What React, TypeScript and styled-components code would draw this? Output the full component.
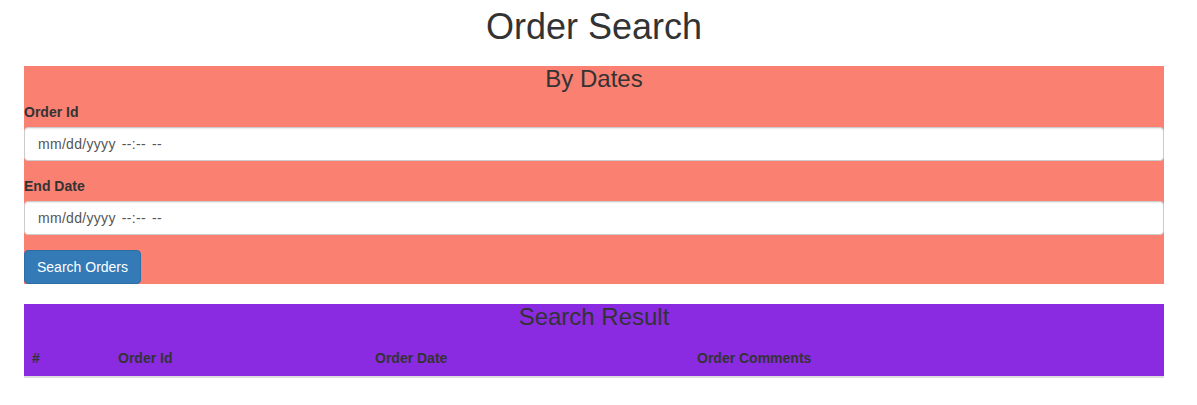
import React from "react";
import styled, { createGlobalStyle } from "styled-components";

const Global = createGlobalStyle`
  html, body { margin: 0; padding: 0; background: #fff; }
  body {
    font-family: "Liberation Sans", Arial, Helvetica, sans-serif;
    font-size: 14px;
    line-height: 1.42857143;
    color: #333;
  }
  * { box-sizing: border-box; }
`;

const Container = styled.div`
  width: 1140px;
  margin: 0 0 0 24px;
`;

const Title = styled.h1`
  margin: 7px 0 19px;
  font-size: 36px;
  font-weight: 500;
  line-height: 1.1;
  text-align: center;
  color: #333;
`;

const Panel = styled.section<{ $bg: string }>`
  background: ${(p) => p.$bg};
  margin-bottom: 20px;
`;

const PanelTitle = styled.h3`
  margin: 0 0 10px;
  font-size: 24px;
  font-weight: 500;
  line-height: 1.1;
  text-align: center;
  color: #333;
`;

const FormGroup = styled.div`
  margin-bottom: 15px;
`;

const Label = styled.label`
  display: inline-block;
  margin-bottom: 5px;
  font-weight: 700;
  color: #333;
`;

const Input = styled.input`
  display: block;
  width: 100%;
  height: 34px;
  padding: 6px 12px 6px 13px;
  font-family: "Liberation Sans", Arial, sans-serif;
  font-size: 14px;
  line-height: 1.42857143;
  letter-spacing: 0.3px;
  word-spacing: 2px;
  color: #555;
  background: #fff;
  border: 1px solid #ccc;
  border-radius: 4px;
  box-shadow: inset 0 1px 1px rgba(0, 0, 0, 0.075);
  outline: none;
  &::placeholder {
    color: #555;
    opacity: 1;
    letter-spacing: 0.3px;
    word-spacing: 2px;
  }
`;

const Button = styled.button`
  display: inline-block;
  height: 34px;
  padding: 6px 12px;
  font-family: "Liberation Sans", Arial, sans-serif;
  font-size: 14px;
  line-height: 1.42857143;
  color: #fff;
  background: #337ab7;
  border: 1px solid #2e6da4;
  border-radius: 4px;
  vertical-align: top;
`;

const Table = styled.table`
  width: 100%;
  border-collapse: collapse;
  border-spacing: 0;
`;

const Th = styled.th<{ $w: number }>`
  width: ${(p) => p.$w}px;
  padding: 8px;
  text-align: left;
  font-weight: 700;
  line-height: 1.42857143;
  color: #333;
  border-bottom: 2px solid #ddd;
`;

export default function App() {
  return (
    <>
      <Global />
      <Container>
        <Title>Order Search</Title>
        <Panel $bg="#fa8072">
          <PanelTitle>By Dates</PanelTitle>
          <FormGroup>
            <Label htmlFor="start">Order Id</Label>
            <Input id="start" type="text" placeholder="mm/dd/yyyy --:-- --" />
          </FormGroup>
          <FormGroup>
            <Label htmlFor="end">End Date</Label>
            <Input id="end" type="text" placeholder="mm/dd/yyyy --:-- --" />
          </FormGroup>
          <Button type="button">Search Orders</Button>
        </Panel>
        <Panel $bg="#8a2be2">
          <PanelTitle>Search Result</PanelTitle>
          <Table>
            <thead>
              <tr>
                <Th $w={86}>#</Th>
                <Th $w={257}>Order Id</Th>
                <Th $w={322}>Order Date</Th>
                <Th $w={475}>Order Comments</Th>
              </tr>
            </thead>
          </Table>
        </Panel>
      </Container>
    </>
  );
}
